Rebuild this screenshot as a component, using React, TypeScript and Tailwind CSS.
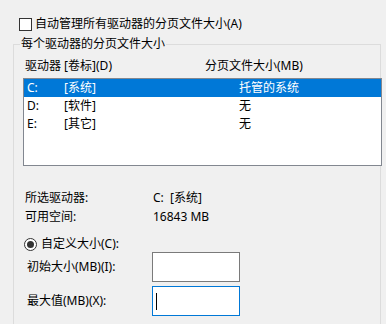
import React from "react";

const drives = [
  { letter: "C:", label: "[系统]", size: "托管的系统", selected: true },
  { letter: "D:", label: "[软件]", size: "无", selected: false },
  { letter: "E:", label: "[其它]", size: "无", selected: false },
];

const App: React.FC = () => {
  return (
    <div className="w-[386px] h-[324px] overflow-hidden bg-[#f0f0f0] text-[12px] text-black font-['Noto_Sans','Noto_Sans_CJK_SC',sans-serif] flex flex-col">
      {/* Auto manage checkbox */}
      <div className="mt-[16px] ml-[19px] flex items-center h-[16px] leading-[16px]">
        <span className="w-[13px] h-[13px] border border-[#333333] bg-white" />
        <span className="ml-[3px]">自动管理所有驱动器的分页文件大小(A)</span>
      </div>

      {/* Group box */}
      <div className="relative mt-[12px] ml-[13px] w-[368px] flex-1 border border-b-0 border-[#dcdcdc] flex flex-col">
        <span className="absolute left-[6px] -top-[9px] px-[1px] bg-[#f0f0f0] leading-[16px]">
          每个驱动器的分页文件大小
        </span>

        {/* Column headers */}
        <div className="mt-[13px] ml-[11px] flex h-[16px] leading-[16px]">
          <span className="w-[180px]">驱动器 [卷标](D)</span>
          <span>分页文件大小(MB)</span>
        </div>

        {/* Drive list */}
        <div className="mt-[4px] ml-[9px] w-[359px] h-[88px] border border-[#828790] bg-white">
          {drives.map((d) => (
            <div
              key={d.letter}
              className={`flex h-[18px] leading-[18px] pl-[3px] ${
                d.selected ? "bg-[#0078d7] text-white" : ""
              }`}
            >
              <span className="w-[37px]">{d.letter}</span>
              <span className="w-[175px]">{d.label}</span>
              <span>{d.size}</span>
            </div>
          ))}
        </div>

        {/* Selected drive info */}
        <div className="mt-[22px] ml-[11px] flex h-[19px] leading-[19px]">
          <span className="w-[128px]">所选驱动器:</span>
          <span>C:&nbsp;&nbsp;[系统]</span>
        </div>
        <div className="ml-[11px] flex h-[19px] leading-[19px]">
          <span className="w-[128px]">可用空间:</span>
          <span>16843 MB</span>
        </div>

        {/* Custom size radio */}
        <div className="mt-[10px] ml-[10px] flex items-center h-[16px] leading-[16px]">
          <span className="w-[13px] h-[13px] rounded-full border border-[#333333] bg-white flex items-center justify-center">
            <span className="w-[7px] h-[7px] rounded-full bg-[#333333]" />
          </span>
          <span className="ml-[4px]">自定义大小(C):</span>
        </div>

        {/* Initial size */}
        <div className="ml-[13px] flex items-center">
          <span className="w-[125px] leading-[16px]">初始大小(MB)(I):</span>
          <div className="w-[88px] h-[30px] border border-[#7a7a7a] bg-white" />
        </div>

        {/* Maximum size */}
        <div className="mt-[4px] ml-[13px] flex items-center">
          <span className="w-[125px] leading-[16px]">最大值(MB)(X):</span>
          <div className="w-[88px] h-[30px] border border-[#0078d7] bg-white flex items-center pl-[3px]">
            <span className="w-[1px] h-[17px] bg-black" />
          </div>
        </div>
      </div>
    </div>
  );
};

export default App;
